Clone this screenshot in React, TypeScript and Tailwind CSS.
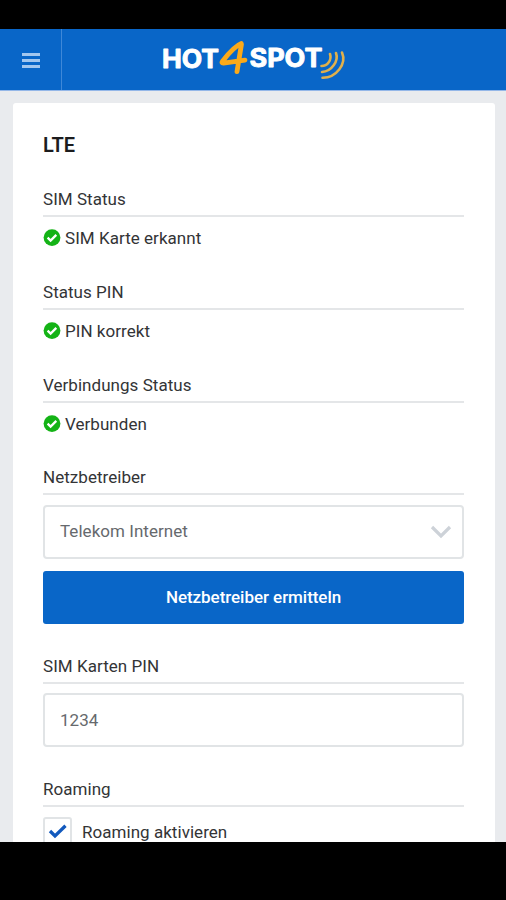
import { useState } from 'react'
import type { ReactNode } from 'react'

interface SectionProps {
  title: string
  className: string
  children: ReactNode
}

function Section({ title, className, children }: SectionProps) {
  return (
    <section className={className}>
      <h2 className="h-[32px] border-b-2 border-[#e4e6e8] text-[17px] leading-7 tracking-[0.04px] text-[#333436]">
        {title}
      </h2>
      {children}
    </section>
  )
}

function StatusRow({ text }: { text: string }) {
  return (
    <div className="mt-[7px] flex h-7 items-center gap-1 text-[17px] tracking-[0.04px] text-[#333436]">
      <svg width="18" height="18" viewBox="0 0 18 18" fill="none" className="shrink-0">
        <circle cx="9" cy="8.6" r="8.4" fill="#14b316" />
        <path d="M4.6 8.6l3 3 5.7-5.7" stroke="#fff" strokeWidth="2.3" />
      </svg>
      <span className="pt-px">{text}</span>
    </div>
  )
}

function Logo() {
  return (
    <svg
      width="190"
      height="50"
      viewBox="0 0 190 50"
      fill="none"
      role="img"
      aria-label="HOT4SPOT"
      className="font-['Inter','Roboto',sans-serif]"
    >
      <g fill="#fff" stroke="#fff" strokeWidth="0.9" strokeLinejoin="round" fontSize="25" fontWeight="700">
        <text x="3" y="32.7" textLength="57" lengthAdjust="spacingAndGlyphs">HOT</text>
        <text x="90.5" y="32" textLength="73" lengthAdjust="spacingAndGlyphs">SPOT</text>
      </g>
      <g stroke="#fba919" strokeLinecap="round" strokeLinejoin="round">
        <path d="M82.3 8.6C76 11 70 18 63.5 26.2Q62 28.3 64.5 28.2L86 25.2M82.5 9L78 36.6" strokeWidth="4.8" />
      </g>
      <g stroke="#e0b04c" strokeWidth="2.6" strokeLinecap="round">
        <path d="M171 19C173 25 168.5 31 162.5 31" />
        <path d="M177 18C180 26 172.5 36.5 163 37" />
        <path d="M183 17.5C188 29 177 43 163.5 42.8" />
      </g>
    </svg>
  )
}

export default function App() {
  const [pin, setPin] = useState('1234')
  const [roaming, setRoaming] = useState(true)

  return (
    <div className="flex h-[900px] w-[506px] flex-col overflow-hidden bg-black font-['Roboto',sans-serif]">
      <div className="h-[29px] shrink-0" />

      <header className="flex h-[62px] shrink-0 border-b border-[#94b7e8] bg-[#0966c8]">
        <button
          type="button"
          aria-label="Menü"
          className="flex w-[62px] items-center justify-center border-r border-[#3f88d8] pt-[2px]"
        >
          <span className="flex w-[18px] flex-col gap-[3px]">
            <span className="h-[3px] bg-[#a3c7ef]" />
            <span className="h-[3px] bg-[#a3c7ef]" />
            <span className="h-[3px] bg-[#a3c7ef]" />
          </span>
        </button>
        <div className="flex flex-1 items-center pl-[97px]">
          <Logo />
        </div>
      </header>

      <main className="h-[751px] shrink-0 overflow-hidden bg-[#e9ebee] pt-3 pr-[11px] pl-[13px]">
        <div className="h-[800px] rounded-[3px] bg-white pt-7 pr-[31px] pl-[30px]">
          <h1 className="h-[54px] text-[20px] leading-[29px] font-semibold text-[#1c1c1e]">LTE</h1>

          <Section title="SIM Status" className="h-[93px]">
            <StatusRow text="SIM Karte erkannt" />
          </Section>
          <Section title="Status PIN" className="h-[93px]">
            <StatusRow text="PIN korrekt" />
          </Section>
          <Section title="Verbindungs Status" className="h-[92px]">
            <StatusRow text="Verbunden" />
          </Section>

          <Section title="Netzbetreiber" className="h-[189px]">
            <button
              type="button"
              className="mt-[10px] flex h-[54px] w-full items-center justify-between rounded-[4px] border-2 border-[#e1e4e6] pr-[10px] pl-[15px] text-[17px] tracking-[0.04px] text-[#66696d]"
            >
              <span>Telekom Internet</span>
              <svg width="22" height="16" viewBox="0 0 22 16" fill="none">
                <path d="M2 3l9 9 9-9" stroke="#cdd2d8" strokeWidth="3.2" />
              </svg>
            </button>
            <button
              type="button"
              className="mt-3 h-[53px] w-full rounded-[3px] bg-[#0966c8] text-[17px] font-medium tracking-[-0.05px] text-white"
            >
              Netzbetreiber ermitteln
            </button>
          </Section>

          <Section title="SIM Karten PIN" className="h-[123px]">
            <input
              aria-label="SIM Karten PIN"
              value={pin}
              onChange={(e) => setPin(e.target.value)}
              className="mt-[9px] h-[54px] w-full rounded-[4px] border-2 border-[#e1e4e6] px-[15px] text-[17px] tracking-[0.04px] text-[#66696d] outline-none"
            />
          </Section>

          <Section title="Roaming" className="h-[100px]">
            <button
              type="button"
              role="checkbox"
              aria-checked={roaming}
              onClick={() => setRoaming(!roaming)}
              className="mt-[10px] flex items-center gap-[10px] text-[17px] tracking-[0.04px] text-[#333436]"
            >
              <span className="flex h-[29px] w-[29px] items-center justify-center rounded-[3px] border-2 border-[#e1e4e6]">
                {roaming && (
                  <svg width="19" height="16" viewBox="0 0 19 16" fill="none">
                    <path d="M2 7l5 5L17.5 1.8" stroke="#1259bd" strokeWidth="3.3" />
                  </svg>
                )}
              </span>
              <span className="pt-[2px]">Roaming aktivieren</span>
            </button>
          </Section>
        </div>
      </main>
    </div>
  )
}
